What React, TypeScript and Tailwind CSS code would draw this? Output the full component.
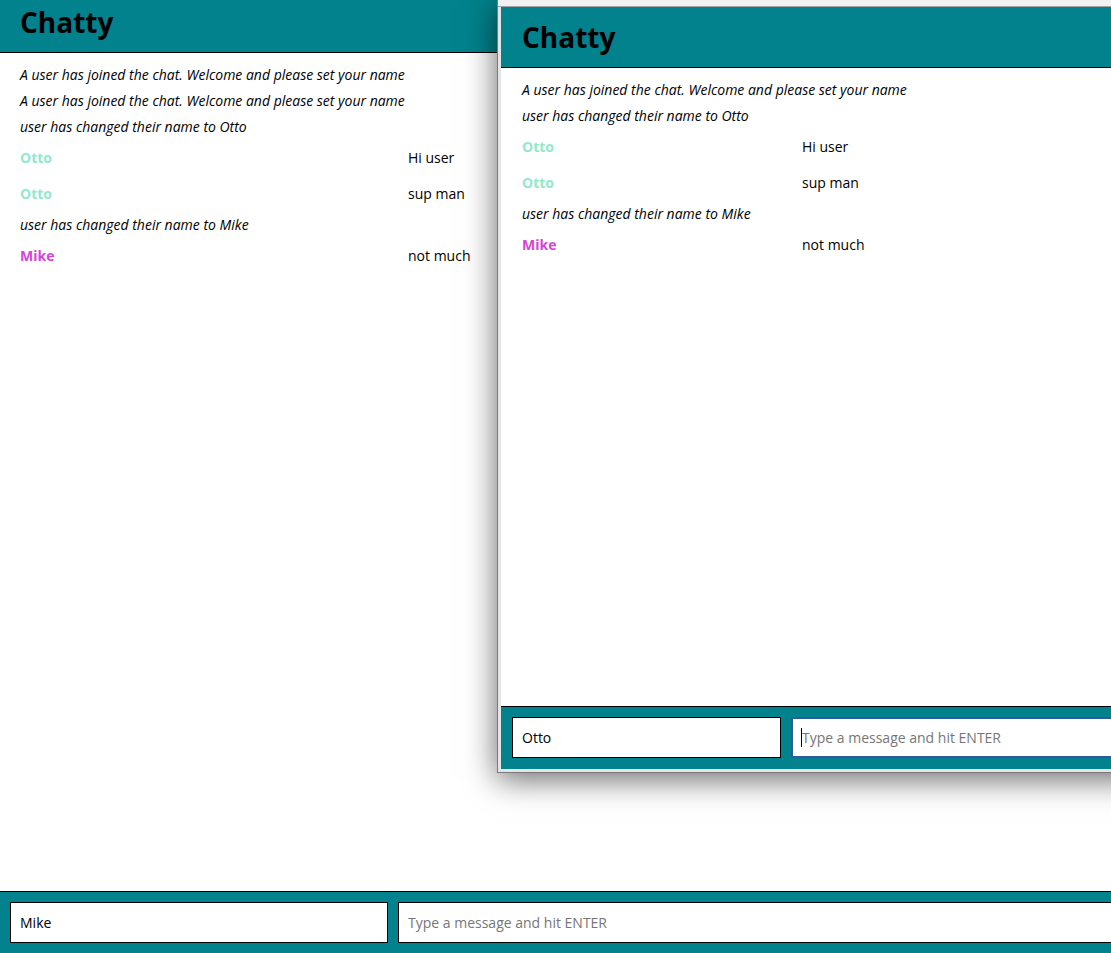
const TEAL = 'bg-[#01828c]';

type Row =
  | { kind: 'system'; text: string }
  | { kind: 'message'; user: string; color: string; text: string };

const backRows: Row[] = [
  { kind: 'system', text: 'A user has joined the chat. Welcome and please set your name' },
  { kind: 'system', text: 'A user has joined the chat. Welcome and please set your name' },
  { kind: 'system', text: 'user has changed their name to Otto' },
  { kind: 'message', user: 'Otto', color: 'text-[#93e8cb]', text: 'Hi user' },
  { kind: 'message', user: 'Otto', color: 'text-[#93e8cb]', text: 'sup man' },
  { kind: 'system', text: 'user has changed their name to Mike' },
  { kind: 'message', user: 'Mike', color: 'text-[#d444d8]', text: 'not much' },
];

const frontRows: Row[] = [
  { kind: 'system', text: 'A user has joined the chat. Welcome and please set your name' },
  { kind: 'system', text: 'user has changed their name to Otto' },
  { kind: 'message', user: 'Otto', color: 'text-[#93e8cb]', text: 'Hi user' },
  { kind: 'message', user: 'Otto', color: 'text-[#93e8cb]', text: 'sup man' },
  { kind: 'system', text: 'user has changed their name to Mike' },
  { kind: 'message', user: 'Mike', color: 'text-[#d444d8]', text: 'not much' },
];

function MessageList({ rows, wide }: { rows: Row[]; wide: boolean }) {
  return (
    <div className="flex flex-col">
      {rows.map((row, i) =>
        row.kind === 'system' ? (
          <div key={i} className="flex h-[26px] items-center italic">
            {row.text}
          </div>
        ) : (
          <div key={i} className="flex h-[36px] items-center">
            <span className={`${wide ? 'w-[388px]' : 'w-[280px]'} shrink-0 font-bold ${row.color}`}>
              {row.user}
            </span>
            <span>{row.text}</span>
          </div>
        ),
      )}
    </div>
  );
}

function Header({ inset }: { inset: boolean }) {
  return (
    <header
      className={`flex h-[61px] shrink-0 items-center border-b border-black ${TEAL} ${inset ? 'pl-[21px]' : 'pl-5'}`}
    >
      <h1 className="text-[28px] font-bold leading-none">Chatty</h1>
    </header>
  );
}

export default function App() {
  return (
    <div className="relative h-[953px] w-[1111px] overflow-hidden bg-white font-['Open_Sans',sans-serif] text-sm text-black">
      {/* Background window: Mike */}
      <div className="flex h-[961px] w-[1560px] -translate-y-2 flex-col">
        <Header inset={false} />
        <main className="flex-1 px-5 pt-[9px]">
          <MessageList rows={backRows} wide />
        </main>
        <footer className={`flex h-[62px] shrink-0 gap-[10px] border-t border-black ${TEAL} p-[10px]`}>
          <input
            readOnly
            value="Mike"
            className="h-[41px] w-[378px] border border-black bg-white px-[9px] outline-none"
          />
          <input
            readOnly
            placeholder="Type a message and hit ENTER"
            className="h-[41px] flex-1 border border-black bg-white px-[9px] outline-none placeholder:text-[#767676]"
          />
        </footer>
      </div>

      {/* Foreground window: Otto */}
      <div className="absolute left-[497px] top-0 flex h-[773px] w-[740px] flex-col border-b border-l border-[#7a7a7a] bg-[#e4e4e4] pb-[3px] pl-[3px] shadow-[0_6px_30px_rgba(0,0,0,0.6)]">
        <div className="-ml-[3px] h-[7px] shrink-0 border-b border-[#a2a2a2] bg-[#f1f1f1]" />
        <div className="flex flex-1 flex-col bg-white">
          <Header inset />
          <main className="flex-1 pl-[21px] pt-[9px]">
            <MessageList rows={frontRows} wide={false} />
          </main>
          <footer className={`flex h-[63px] shrink-0 gap-[10px] border-t border-black ${TEAL} px-[11px] pt-[10px]`}>
            <input
              readOnly
              value="Otto"
              className="h-[41px] w-[269px] border border-black bg-white px-[9px] outline-none"
            />
            <div className="relative h-[41px] flex-1">
              <input
                readOnly
                placeholder="Type a message and hit ENTER"
                className="h-full w-full border-2 border-[#2f5aa3] bg-white px-[9px] outline-none placeholder:text-[#767676]"
              />
              <span className="absolute left-[10px] top-[11px] h-[19px] w-px bg-black" />
            </div>
          </footer>
        </div>
      </div>
    </div>
  );
}
